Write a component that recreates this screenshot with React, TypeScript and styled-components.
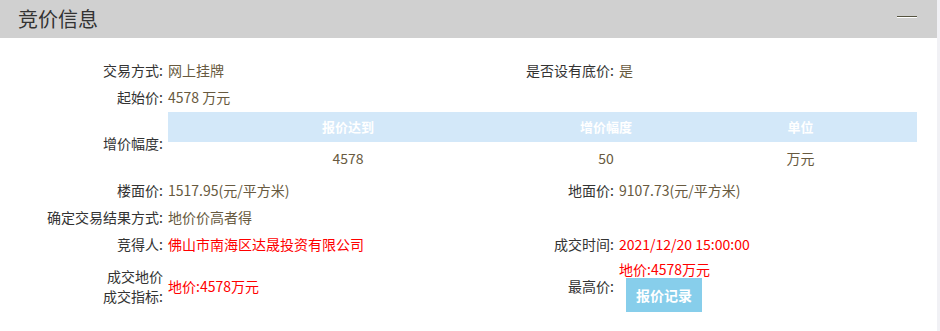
import styled, { createGlobalStyle } from "styled-components";

const GlobalStyle = createGlobalStyle`
  body {
    margin: 0;
    background: #fff;
    font-family: "Noto Sans CJK SC", "Noto Sans", sans-serif;
  }
`;

const Frame = styled.div`
  display: flex;
  width: 940px;
  height: 331px;
  overflow: hidden;
`;

const Panel = styled.div`
  flex: 1;
`;

const Rail = styled.div`
  width: 3px;
  background: #f1f1f5;
`;

const Header = styled.div`
  height: 38px;
  background: #d0d0d0;
  display: flex;
  align-items: center;
  justify-content: space-between;
  padding: 0 20px 0 18px;
`;

const Title = styled.h2`
  margin: 0;
  font-size: 20px;
  font-weight: normal;
  color: #333;
  line-height: 1;
`;

const Collapse = styled.span`
  width: 20px;
  height: 1px;
  margin-top: -4px;
  background: #55533f;
  border-bottom: 1px solid #fff;
`;

const Grid = styled.div`
  display: grid;
  grid-template-columns: 165px 285px 166px 1fr;
  grid-auto-rows: minmax(27px, auto);
  align-items: center;
  padding-top: 18px;
  font-size: 14px;
`;

const Label = styled.div<{ $tall?: boolean }>`
  text-align: right;
  padding-right: 2px;
  color: #333;
  line-height: ${(p) => (p.$tall ? "20px" : "18px")};
`;

const Value = styled.div<{ $red?: boolean }>`
  padding-left: 3px;
  color: ${(p) => (p.$red ? "#ff0000" : "#685a40")};
  line-height: 18px;
  white-space: nowrap;
`;

const Wide = styled.div`
  grid-column: 2 / 5;
  margin: 2px 20px 2px 3px;
`;

const Inner = styled.div`
  display: grid;
  grid-template-columns: 360px 156px 1fr;
`;

const Th = styled.div`
  height: 30px;
  line-height: 30px;
  background: #d3e8f9;
  color: #fff;
  font-size: 13px;
  font-weight: bold;
  text-align: center;
`;

const Td = styled.div`
  height: 32px;
  line-height: 32px;
  color: #685a40;
  text-align: center;
`;

const Stack = styled.div`
  display: flex;
  flex-direction: column;
  align-items: flex-start;
  padding: 3px 0 3px;
`;

const RecordButton = styled.button`
  margin-left: 10px;
  width: 76px;
  height: 34px;
  border: none;
  background: #87ceeb;
  color: #fff;
  font-family: inherit;
  font-size: 14px;
  font-weight: bold;
  padding: 0;
`;

export default function App() {
  return (
    <>
      <GlobalStyle />
      <Frame>
        <Panel>
          <Header>
            <Title>竞价信息</Title>
            <Collapse />
          </Header>
          <Grid>
            <Label>交易方式:</Label>
            <Value>网上挂牌</Value>
            <Label>是否设有底价:</Label>
            <Value>是</Value>

            <Label>起始价:</Label>
            <Value>4578 万元</Value>
            <div />
            <div />

            <Label>增价幅度:</Label>
            <Wide>
              <Inner>
                <Th>报价达到</Th>
                <Th>增价幅度</Th>
                <Th>单位</Th>
                <Td>4578</Td>
                <Td>50</Td>
                <Td>万元</Td>
              </Inner>
            </Wide>

            <Label>楼面价:</Label>
            <Value>1517.95(元/平方米)</Value>
            <Label>地面价:</Label>
            <Value>9107.73(元/平方米)</Value>

            <Label>确定交易结果方式:</Label>
            <Value>地价价高者得</Value>
            <div />
            <div />

            <Label>竞得人:</Label>
            <Value $red>佛山市南海区达晟投资有限公司</Value>
            <Label>成交时间:</Label>
            <Value $red>2021/12/20 15:00:00</Value>

            <Label $tall>
              成交地价
              <br />
              成交指标:
            </Label>
            <Value $red>地价:4578万元</Value>
            <Label>最高价:</Label>
            <Stack>
              <Value $red>地价:4578万元</Value>
              <RecordButton>报价记录</RecordButton>
            </Stack>
          </Grid>
        </Panel>
        <Rail />
      </Frame>
    </>
  );
}
